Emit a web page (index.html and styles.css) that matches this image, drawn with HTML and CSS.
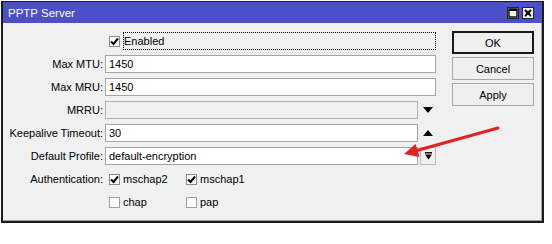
FILE: index.html
```html
<!DOCTYPE html>
<html>
<head>
<meta charset="utf-8">
<link rel="stylesheet" href="styles.css">
</head>
<body>
<div class="window">
  <div class="titlebar">
    <span class="title">PPTP Server</span>
    <div class="tbtns">
      <span class="tbtn"><svg width="10" height="10" viewBox="0 0 10 10"><rect x="1" y="1" width="8" height="8" fill="none" stroke="#000" stroke-width="1.4"/><rect x="1" y="1" width="8" height="2" fill="#000"/></svg></span>
      <span class="tbtn"><svg width="10" height="10" viewBox="0 0 10 10"><path d="M2 2 L8 8 M8 2 L2 8" stroke="#000" stroke-width="2"/></svg></span>
    </div>
  </div>
  <div class="content">
    <div class="form">
      <div class="row">
        <span class="label"></span>
        <span class="cb checked"><svg width="9" height="9" viewBox="0 0 9 9"><path d="M1 4.5 L3.5 7 L8 1.5" fill="none" stroke="#000" stroke-width="2"/></svg></span>
        <span class="focus">Enabled</span>
      </div>
      <div class="row">
        <span class="label">Max MTU:</span>
        <span class="input full">1450</span>
      </div>
      <div class="row">
        <span class="label">Max MRU:</span>
        <span class="input full">1450</span>
      </div>
      <div class="row">
        <span class="label">MRRU:</span>
        <span class="input short disabled"></span>
        <span class="spin"><svg width="10" height="6" viewBox="0 0 10 6"><path d="M0 0 L10 0 L5 6 Z" fill="#000"/></svg></span>
      </div>
      <div class="row">
        <span class="label">Keepalive Timeout:</span>
        <span class="input short">30</span>
        <span class="spin"><svg width="10" height="6" viewBox="0 0 10 6"><path d="M0 6 L10 6 L5 0 Z" fill="#000"/></svg></span>
      </div>
      <div class="row">
        <span class="label">Default Profile:</span>
        <span class="input short">default-encryption</span>
        <span class="drop"><svg width="7" height="8" viewBox="0 0 7 8"><rect x="0" y="0" width="7" height="1.5" fill="#000"/><path d="M0 2.5 L7 2.5 L3.5 7.5 Z" fill="#000"/></svg></span>
      </div>
      <div class="row">
        <span class="label">Authentication:</span>
        <span class="opt"><span class="cb checked"><svg width="9" height="9" viewBox="0 0 9 9"><path d="M1 4.5 L3.5 7 L8 1.5" fill="none" stroke="#000" stroke-width="2"/></svg></span>mschap2</span>
        <span class="opt"><span class="cb checked"><svg width="9" height="9" viewBox="0 0 9 9"><path d="M1 4.5 L3.5 7 L8 1.5" fill="none" stroke="#000" stroke-width="2"/></svg></span>mschap1</span>
      </div>
      <div class="row">
        <span class="label"></span>
        <span class="opt"><span class="cb"></span>chap</span>
        <span class="opt"><span class="cb"></span>pap</span>
      </div>
    </div>
    <div class="buttons">
      <span class="btn default">OK</span>
      <span class="btn">Cancel</span>
      <span class="btn">Apply</span>
    </div>
  </div>
</div>
<svg class="arrow" width="552" height="244" viewBox="0 0 552 244">
  <line x1="498" y1="128" x2="415" y2="151" stroke="#e42222" stroke-width="3" stroke-linecap="round"/>
  <polygon points="404,154 419.5,157 415.5,144" fill="#e42222"/>
</svg>
</body>
</html>
```
FILE: styles.css
```css
html, body {
  margin: 0;
  padding: 0;
  background: #ffffff;
}
body {
  position: relative;
  width: 552px;
  height: 244px;
  font-family: "Liberation Sans", Arial, sans-serif;
  font-size: 11px;
  color: #000;
}
.window {
  box-sizing: border-box;
  margin: 1px 0 0 1px;
  width: 543px;
  height: 222px;
  border: 2px solid #1c1c1c;
  border-top-width: 1px;
  background: #f0f0f0;
  display: flex;
  flex-direction: column;
}
.titlebar {
  height: 21px;
  flex: none;
  background: #4b50c8;
  color: #fff;
  display: flex;
  align-items: center;
  justify-content: space-between;
  padding: 0 8px 0 5px;
  font-size: 11.5px;
}
.tbtns {
  display: flex;
  gap: 3px;
  margin-top: 1px;
}
.tbtn {
  box-sizing: border-box;
  width: 12px;
  height: 12px;
  background: #f0f0f0;
  border: 1px solid #222;
  display: flex;
  align-items: center;
  justify-content: center;
}
.tbtn svg { display: block; }
.content {
  flex: 1;
  display: flex;
  align-items: flex-start;
  padding: 8px 0 0 0;
  border-right: 1px solid #a0a0a0;
  border-bottom: 1px solid #a0a0a0;
}
.form {
  width: 433px;
  margin-top: 1px;
  display: flex;
  flex-direction: column;
  gap: 5px;
}
.row {
  display: flex;
  align-items: center;
  height: 18px;
}
.label {
  width: 100px;
  flex: none;
  text-align: right;
  margin-right: 2px;
  white-space: nowrap;
}
.input {
  box-sizing: border-box;
  height: 18px;
  border: 1px solid #a5a5a5;
  background: #fff;
  padding-left: 3px;
  display: flex;
  align-items: center;
}
.input.full { width: 331px; }
.input.short { width: 313px; }
.input.disabled { background: #f0f0f0; border-color: #b0b0b0; }
.spin {
  width: 18px;
  display: flex;
  justify-content: center;
}
.spin svg { display: block; margin-left: 2px; }
.drop {
  box-sizing: border-box;
  margin-left: 2px;
  width: 16px;
  height: 18px;
  border: 1px solid #b8b8b8;
  display: flex;
  align-items: center;
  justify-content: center;
}
.drop svg { display: block; }
.cb {
  box-sizing: border-box;
  flex: none;
  width: 11px;
  height: 11px;
  border: 1px solid #a0a0a0;
  background: #fff;
  display: flex;
  align-items: center;
  justify-content: center;
  margin-left: 4px;
}
.cb svg { display: block; }
.cb.checked { border-color: #8a8a8a; }
.focus {
  box-sizing: border-box;
  margin-left: 3px;
  flex: 1;
  height: 18px;
  border: 1px dotted #000;
  padding-left: 0;
  display: flex;
  align-items: center;
}
.opt {
  display: flex;
  align-items: center;
  width: 77px;
  gap: 3px;
}
.buttons {
  margin-left: 16px;
  width: 82px;
  display: flex;
  flex-direction: column;
  gap: 3px;
}
.btn {
  box-sizing: border-box;
  height: 23px;
  border: 1px solid #a8a8a8;
  background: #efefef;
  display: flex;
  align-items: center;
  justify-content: center;
}
.btn.default {
  border: 2px solid #1a1a1a;
}
.arrow {
  position: absolute;
  left: 0;
  top: 0;
  pointer-events: none;
}
```
